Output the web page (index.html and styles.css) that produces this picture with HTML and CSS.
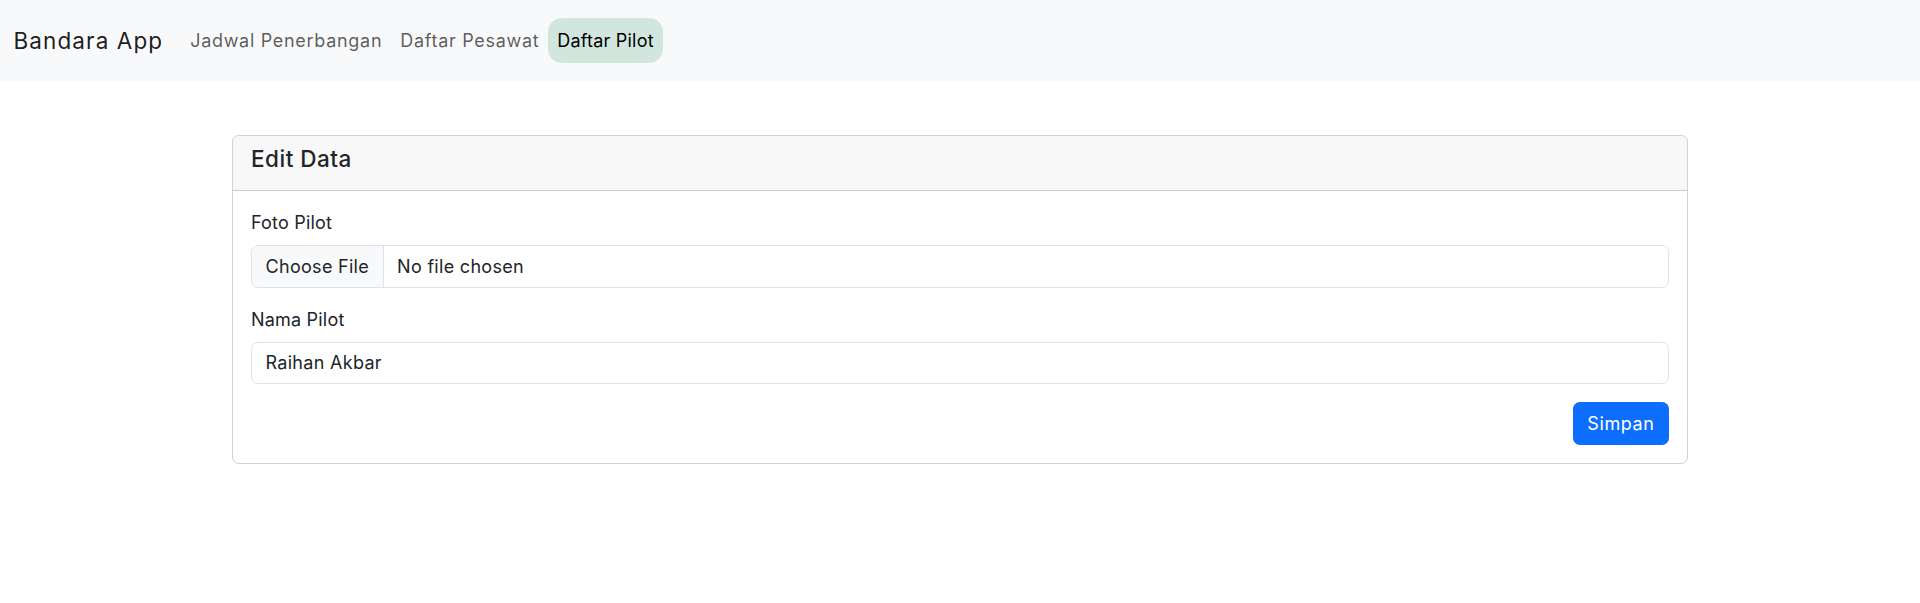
FILE: index.html
```html
<!DOCTYPE html>
<html lang="id">
<head>
<meta charset="utf-8">
<title>Bandara App</title>
<link rel="stylesheet" href="styles.css">
</head>
<body>
<nav class="navbar">
  <a class="brand" href="#">Bandara App</a>
  <ul class="nav">
    <li><a class="nav-link" href="#">Jadwal Penerbangan</a></li>
    <li><a class="nav-link" href="#">Daftar Pesawat</a></li>
    <li><a class="nav-link active" href="#">Daftar Pilot</a></li>
  </ul>
</nav>
<main class="container">
  <div class="card">
    <div class="card-header">
      <h5 class="card-title">Edit Data</h5>
    </div>
    <div class="card-body">
      <form>
        <div class="field">
          <label class="form-label" for="foto">Foto Pilot</label>
          <input class="form-control" type="file" id="foto">
        </div>
        <div class="field">
          <label class="form-label" for="nama">Nama Pilot</label>
          <input class="form-control" type="text" id="nama" value="Raihan Akbar">
        </div>
        <div class="actions">
          <button class="btn" type="submit">Simpan</button>
        </div>
      </form>
    </div>
  </div>
</main>
</body>
</html>
```
FILE: styles.css
```css
html, body {
  margin: 0;
  padding: 0;
}
body {
  font-family: Inter, "Noto Sans", sans-serif;
  font-size: 18px;
  line-height: 1.5;
  color: #212529;
  background: #fff;
}
a { text-decoration: none; }

.navbar {
  display: flex;
  align-items: center;
  background: #f8f9fa;
  padding: 18px 13.5px;
}
.brand {
  font-size: 22.5px;
  line-height: 1.5;
  padding: 5.6px 0;
  margin-right: 18px;
  color: rgba(0, 0, 0, 0.9);
  letter-spacing: 1.1px;
}
.nav {
  display: flex;
  list-style: none;
  margin: 0;
  padding: 0;
}
.nav-link {
  display: block;
  padding: 9px;
  color: rgba(0, 0, 0, 0.65);
  border-radius: 14px;
  letter-spacing: 0.7px;
}
.nav-link.active {
  background: #d1e7dd;
  color: #000;
  letter-spacing: 0.2px;
}

.container {
  width: 1456px;
  margin: 54px auto 0;
}
.card {
  border: 1px solid rgba(0, 0, 0, 0.175);
  border-radius: 6.75px;
  overflow: hidden;
}
.card-header {
  padding: 9px 18px;
  background: rgba(33, 37, 41, 0.03);
  border-bottom: 1px solid rgba(0, 0, 0, 0.175);
}
.card-title {
  margin: 0 0 9px;
  font-size: 22.5px;
  font-weight: 500;
  line-height: 1.2;
  letter-spacing: 0.5px;
}
.card-body {
  padding: 18px;
}
.field {
  margin-bottom: 18px;
}
.form-label {
  display: inline-block;
  margin-bottom: 9px;
  letter-spacing: 0.2px;
}
.form-control {
  display: block;
  width: 100%;
  box-sizing: border-box;
  margin: 0;
  padding: 6.75px 13.5px;
  font-family: inherit;
  font-size: 18px;
  line-height: 1.5;
  color: #212529;
  background: #fff;
  border: 1px solid #dee2e6;
  border-radius: 6.75px;
  letter-spacing: 0.3px;
}
.form-control::file-selector-button {
  padding: 6.75px 13.5px;
  margin: -6.75px 13.5px -6.75px -13.5px;
  font: inherit;
  letter-spacing: inherit;
  color: #212529;
  background: #f8f9fa;
  border: 0 solid #dee2e6;
  border-right-width: 1px;
  border-radius: 0;
}
.actions {
  display: flex;
  justify-content: flex-end;
}
.btn {
  font-family: inherit;
  font-size: 18px;
  line-height: 1.5;
  padding: 6.75px 13.5px;
  color: #fff;
  background: #0d6efd;
  border: 1px solid #0d6efd;
  border-radius: 6.75px;
  letter-spacing: 0.6px;
  cursor: pointer;
}
```
